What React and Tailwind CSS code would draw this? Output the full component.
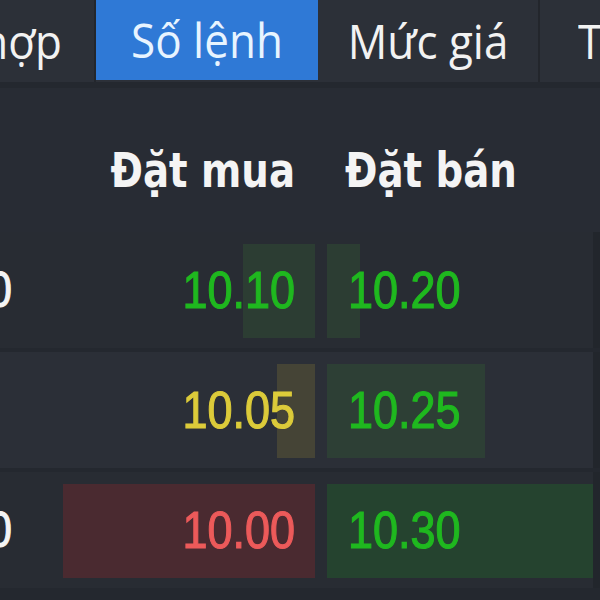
import React from "react";

const rows = [
  { left: "0", buy: "10.10", buyColor: "text-[#1fb81f]", buyBar: 72, buyBarColor: "bg-[#2c3d33]", sell: "10.20", sellBar: 33, sellBarColor: "bg-[#2c3d33]", bg: "bg-[#282c33]" },
  { left: "", buy: "10.05", buyColor: "text-[#dccb3a]", buyBar: 38, buyBarColor: "bg-[#454436]", sell: "10.25", sellBar: 158, sellBarColor: "bg-[#2d3f35]", bg: "bg-[#2b2f37]" },
  { left: "0", buy: "10.00", buyColor: "text-[#ec5a5a]", buyBar: 252, buyBarColor: "bg-[#4a2a30]", sell: "10.30", sellBar: 266, sellBarColor: "bg-[#25432f]", bg: "bg-[#282c33]" },
];

export default function App() {
  return (
    <div className="w-[600px] h-[600px] overflow-hidden bg-[#24282f] flex flex-col" style={{ fontFamily: '"Open Sans", "Noto Sans", sans-serif' }}>
      {/* Tabs */}
      <div className="h-[82px] shrink-0 flex bg-[#2c3038] text-[#f2f2f2] text-[44px] leading-none">
        <div className="w-[96px] shrink-0 flex items-center justify-end pr-[32px] pb-[2px] border-r-2 border-[#23262c] overflow-hidden">
          <span className="whitespace-nowrap scale-y-110">hợp</span>
        </div>
        <div className="w-[222px] shrink-0 flex items-center justify-center bg-[#2f79d6] text-[#e8f4ff] h-[80px] pb-[2px]">
          <span className="scale-y-110">Số lệnh</span>
        </div>
        <div className="w-[222px] shrink-0 flex items-center justify-center border-r-2 border-[#23262c] pb-[2px]">
          <span className="scale-y-110">Mức giá</span>
        </div>
        <div className="flex-1 flex items-center pl-[38px] pb-[2px]">
          <span className="scale-y-110">T</span>
        </div>
      </div>
      {/* Header */}
      <div className="mt-[6px] h-[144px] shrink-0 flex bg-[#282c34] text-[#f4f4f4] font-bold text-[43px] leading-none" style={{ fontFamily: '"DejaVu Sans Condensed", "DejaVu Sans", sans-serif' }}>
        <div className="w-[55px] shrink-0" />
        <div className="w-[260px] shrink-0 flex items-center justify-end pr-[20px] pt-[22px]">
          <span className="scale-y-110">Đặt mua</span>
        </div>
        <div className="w-[12px] shrink-0" />
        <div className="w-[266px] shrink-0 flex items-center pl-[18px] pt-[22px]">
          <span className="scale-y-110">Đặt bán</span>
        </div>
      </div>
      {/* Rows */}
      <div className="flex flex-col gap-[4px]" style={{ fontFamily: '"Liberation Sans", Arial, sans-serif' }}>
        {rows.map((r, i) => (
          <div key={i} className={`h-[116px] flex ${r.bg}`}>
            <div className="w-[55px] shrink-0 flex items-center justify-end pr-[43px] text-[44px] text-[#f4f4f4]">
              <span className="scale-y-115 leading-none [-webkit-text-stroke:1px_currentColor]">{r.left}</span>
            </div>
            <div className="w-[260px] shrink-0 relative flex items-center justify-end pr-[20px] py-[12px]">
              <div className={`absolute right-0 top-[12px] bottom-[10px] ${r.buyBarColor}`} style={{ width: r.buyBar }} />
              <span className={`relative text-[45px] leading-none scale-y-115 [-webkit-text-stroke:1px_currentColor] ${r.buyColor}`}>{r.buy}</span>
            </div>
            <div className="w-[12px] shrink-0" />
            <div className="w-[266px] shrink-0 relative flex items-center pl-[21px]">
              <div className={`absolute left-0 top-[12px] bottom-[10px] ${r.sellBarColor}`} style={{ width: r.sellBar }} />
              <span className="relative text-[45px] leading-none scale-y-115 [-webkit-text-stroke:1px_currentColor] text-[#1fb81f]">{r.sell}</span>
            </div>
            <div className="flex-1 bg-[#22262c]" />
          </div>
        ))}
      </div>
    </div>
  );
}
